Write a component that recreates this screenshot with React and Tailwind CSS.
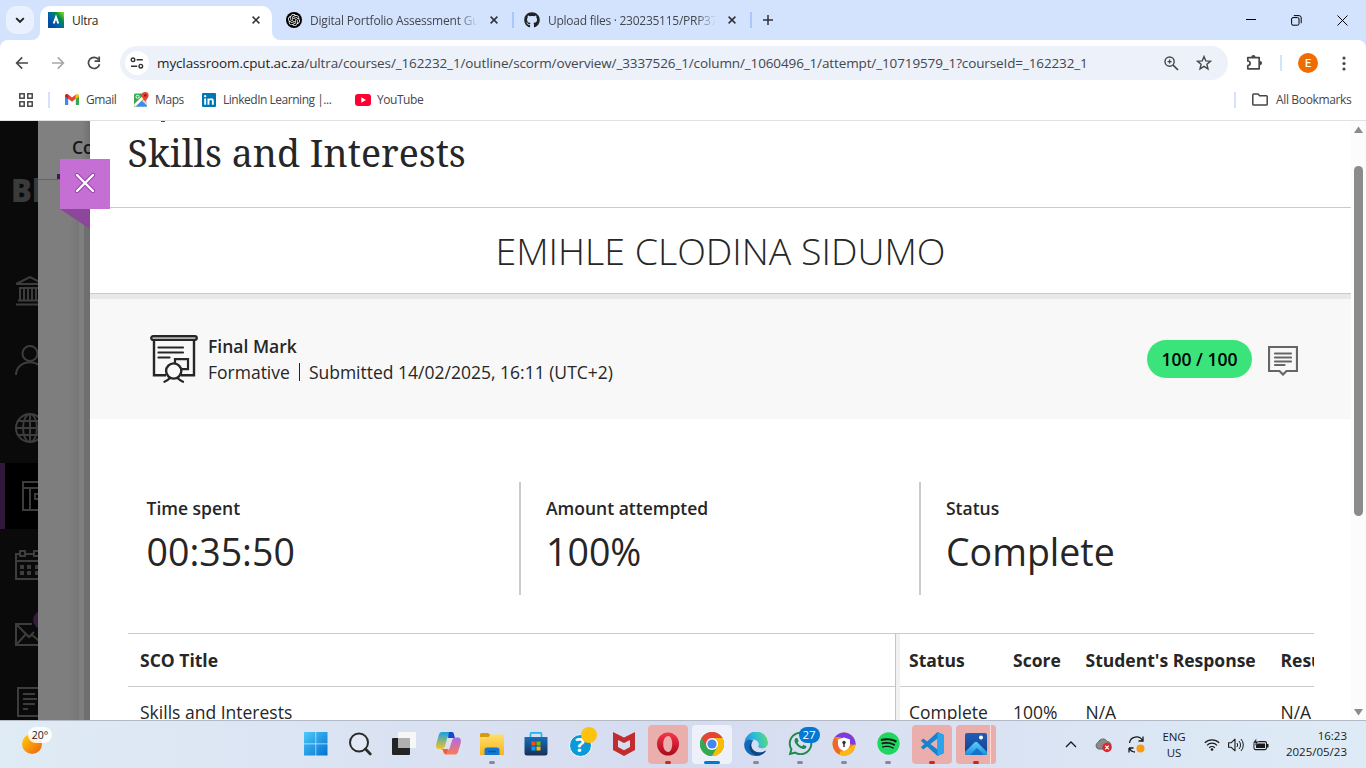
import React from "react";
import { FaGithub, FaWhatsapp, FaSpotify } from "react-icons/fa";
import { SiOpenai } from "react-icons/si";

const UI = "font-['Open_Sans','Noto_Sans',sans-serif]";

function Svg({ w, h, vb, children, className = "" }) {
  return (
    <svg width={w} height={h} viewBox={vb || `0 0 ${w} ${h}`} fill="none" className={`block shrink-0 ${className}`}>
      {children}
    </svg>
  );
}

function CloseX({ className = "" }) {
  return (
    <Svg w={8} h={8} className={className}>
      <path d="M0.6 0.6L7.4 7.4M7.4 0.6L0.6 7.4" stroke="#303236" strokeWidth="1.5" />
    </Svg>
  );
}

function TabStrip() {
  return (
    <div className="flex h-10 w-full bg-[#d3e2fd]">
      <div className="ml-1.5 mt-1.5 flex h-7 w-7 items-center justify-center rounded-[10px] bg-[#e9f0fe]">
        <Svg w={10} h={7}><path d="M1.2 1.2L5 5L8.8 1.2" stroke="#1f1f1f" strokeWidth="1.9" /></Svg>
      </div>
      <div className="relative ml-1.5 mt-1.5 flex h-[34px] w-[232px] items-center rounded-t-[10px] bg-white pb-[6px]">
        <Svg w={8} h={8} className="absolute -left-2 bottom-0"><path d="M8 0V8H0A8 8 0 0 0 8 0Z" fill="#fff" /></Svg>
        <Svg w={8} h={8} className="absolute -right-2 bottom-0"><path d="M0 0V8H8A8 8 0 0 1 0 0Z" fill="#fff" /></Svg>
        <Svg w={16} h={16} className="ml-2">
          <defs>
            <linearGradient id="ultra" x1="1" y1="0" x2="0.15" y2="0.7">
              <stop offset="0.08" stopColor="#7ed321" /><stop offset="0.4" stopColor="#008a4a" /><stop offset="0.75" stopColor="#0060b4" /><stop offset="1" stopColor="#064a9e" />
            </linearGradient>
          </defs>
          <rect width="16" height="16" fill="url(#ultra)" />
          <path d="M5.7 11.5L8 5L10.3 11.5" stroke="#fff" strokeWidth="1.9" />
        </Svg>
        <span className="ml-2 pt-px text-[12px] leading-4 tracking-[-0.3px] text-[#1f1f1f]">Ultra</span>
        <CloseX className="ml-auto mr-3" />
      </div>
      <div className="flex h-10 w-[242px] items-center pl-[14px]">
        <div className="flex h-4 w-4 items-center justify-center rounded-full bg-black"><SiOpenai size={12} color="#fff" /></div>
        <div className="ml-2 w-[168px] overflow-hidden whitespace-nowrap pt-px text-[12px] leading-4 tracking-[-0.2px] text-[#43474e] [mask-image:linear-gradient(to_right,#000_88%,transparent)]">Digital Portfolio Assessment Guide</div>
        <CloseX className="ml-3" />
        <div className="ml-auto h-4 w-[2px] bg-[#a8c7fa]" />
      </div>
      <div className="flex h-10 w-[238px] items-center pl-[10px]">
        <FaGithub size={16} color="#1f2328" />
        <div className="ml-2 w-[168px] overflow-hidden whitespace-nowrap pt-px text-[12px] leading-4 tracking-[-0.26px] text-[#43474e] [mask-image:linear-gradient(to_right,#000_88%,transparent)]">Upload files · 230235115/PRP370S</div>
        <CloseX className="ml-3" />
        <div className="ml-auto h-4 w-[2px] bg-[#a8c7fa]" />
      </div>
      <div className="flex h-10 items-center pl-[11px]">
        <Svg w={10} h={10}><path d="M5 0V10M0 5H10" stroke="#303236" strokeWidth="1.5" /></Svg>
      </div>
      <div className="ml-auto flex h-10 items-center">
        <Svg w={10} h={10} className="mr-[35px]"><path d="M0 4.5H10" stroke="#000" /></Svg>
        <Svg w={11} h={11} className="mr-[35px]">
          <rect x="0.6" y="2.6" width="7.4" height="7.6" rx="1.4" stroke="#000" />
          <path d="M2.8 0.6H8A2.3 2.3 0 0 1 10.2 2.9V8.2" stroke="#000" />
        </Svg>
        <Svg w={11} h={11} className="mr-[18px]"><path d="M0.5 0.5L10.5 10.5M10.5 0.5L0.5 10.5" stroke="#000" /></Svg>
      </div>
    </div>
  );
}

function Toolbar() {
  return (
    <div className="w-full bg-[#d3e2fd]">
      <div className="flex h-[46px] w-full items-center rounded-t-[8px] bg-white">
        <Svg w={14} h={14} className="ml-[15px]"><path d="M13 7H1.8M7.2 1.4L1.6 7L7.2 12.6" stroke="#474747" strokeWidth="1.6" /></Svg>
        <Svg w={14} h={14} className="ml-[22px]"><path d="M1 7H12.2M6.8 1.4L12.4 7L6.8 12.6" stroke="#a5a8ab" strokeWidth="1.6" /></Svg>
        <Svg w={14} h={14} className="ml-[22px]">
          <path d="M11.6 3.6A5.6 5.6 0 1 0 12.5 8.2" stroke="#474747" strokeWidth="1.7" />
          <path d="M12.2 0.6V5.2H7.6" stroke="#474747" strokeWidth="1.7" />
        </Svg>
        <div className="ml-[19px] flex h-[34px] w-[1108px] items-center rounded-full bg-[#ecf1fa]">
          <div className="ml-[5px] flex h-6 w-6 items-center justify-center rounded-full bg-white">
            <Svg w={14} h={12} className="text-[#303236]">
              <circle cx="3" cy="2.8" r="1.8" stroke="currentColor" strokeWidth="1.4" />
              <path d="M6.6 2.8H12.8M1 9.2H7.2" stroke="currentColor" strokeWidth="1.5" />
              <circle cx="10.8" cy="9.2" r="1.8" stroke="currentColor" strokeWidth="1.4" />
            </Svg>
          </div>
          <span className="ml-2 whitespace-nowrap text-[13.5px] leading-5 tracking-[-0.122px] text-[#43474e]">
            <span className="text-[#1f1f1f]">myclassroom.cput.ac.za</span>/ultra/courses/_162232_1/outline/scorm/overview/_3337526_1/column/_1060496_1/attempt/_10719579_1?courseId=_162232_1
          </span>
          <Svg w={15} h={15} className="ml-auto text-[#474747]">
            <circle cx="5.6" cy="5.6" r="4.6" stroke="currentColor" strokeWidth="1.4" />
            <path d="M9 9L14 14" stroke="currentColor" strokeWidth="1.7" />
            <path d="M5.6 3.6V7.6M3.6 5.6H7.6" stroke="currentColor" strokeWidth="1.3" />
          </Svg>
          <Svg w={16} h={16} className="ml-[17px] mr-4">
            <path d="M8 1.6L9.8 5.9L14.5 6.3L10.9 9.3L12 13.9L8 11.4L4 13.9L5.1 9.3L1.5 6.3L6.2 5.9Z" stroke="#474747" strokeWidth="1.4" />
          </Svg>
        </div>
        <Svg w={17} h={17} className="ml-[18px] mb-px">
          <path d="M1.8 3.6H13.2V14.8H1.8V11.6A2.2 2.2 0 0 0 1.8 7Z" stroke="#474747" strokeWidth="1.7" strokeLinejoin="round" />
          <path d="M5.3 3A2.1 2.1 0 0 1 9.5 3Z" fill="#474747" /><path d="M14 7A2.1 2.1 0 0 1 14 11.2Z" fill="#474747" />
        </Svg>
        <div className="ml-[17px] h-4 w-[2px] bg-[#d3e2fd]" />
        <div className="ml-4 flex h-5 w-5 items-center justify-center rounded-full bg-[#ef6c00] text-[11px] font-medium leading-none text-white font-[Roboto,sans-serif]">E</div>
        <Svg w={4} h={15} className="ml-[24px]"><circle cx="2" cy="2" r="1.6" fill="#474747" /><circle cx="2" cy="7.5" r="1.6" fill="#474747" /><circle cx="2" cy="13" r="1.6" fill="#474747" /></Svg>
      </div>
    </div>
  );
}

function Bookmarks() {
  return (
    <div className="flex h-[35px] w-full items-center border-b border-[#dfe1e4] bg-white pb-[7px] text-[12px] leading-4 text-[#43474e]">
      <Svg w={14} h={14} className="ml-[19px]">
        {[[0.8, 0.8], [8.8, 0.8], [0.8, 8.8], [8.8, 8.8]].map(([x, y]) => (
          <rect key={`${x}${y}`} x={x} y={y} width="4.4" height="4.4" stroke="#474747" strokeWidth="1.5" />
        ))}
      </Svg>
      <div className="ml-[15px] h-4 w-[2px] bg-[#d3e2fd]" />
      <Svg w={14} h={11} className="ml-[15px]">
        <path d="M0 1.6V11H3.2V4.6Z" fill="#4285f4" /><path d="M14 1.6V11H10.8V4.6Z" fill="#34a853" />
        <path d="M0 2.2C0 0 2 -0.4 3.2 0.6L7 3.6L10.8 0.6V4.8L7 7.8L3.2 4.8L0 2.6Z" fill="#ea4335" />
        <path d="M10.8 0.6C12 -0.4 14 0 14 2.2V2.6L10.8 5Z" fill="#fbbc04" /><path d="M0 2.2C0 0.6 1.2 0 2.2 0.2L3.2 0.8V5L0 2.6Z" fill="#c5221f" />
      </Svg>
      <span className="ml-[7px] w-[32px] whitespace-nowrap tracking-[-0.45px]">Gmail</span>
      <Svg w={15} h={15} className="ml-4">
        <rect y="1.5" width="13" height="13" rx="1.5" fill="#34a853" />
        <path d="M0.5 14L7 7.5L13 13.5V14.5H1Z" fill="#4285f4" />
        <path d="M0 12.5L9 3.5L11 6L1.5 14.5H1A1 1 0 0 1 0 13.5Z" fill="#fbbc04" />
        <path d="M8 9L13 13.5V5Z" fill="#d8dce0" />
        <path d="M0 12.5L7.5 5L9 7L1.5 14.5Z" fill="#fff" />
        <circle cx="3.6" cy="4.8" r="1.6" stroke="#fff" />
        <path d="M11.2 0A3.4 3.4 0 0 1 14.6 3.4C14.6 6 11.9 6.8 11.2 10.4C10.5 6.8 7.8 6 7.8 3.4A3.4 3.4 0 0 1 11.2 0Z" fill="#ea4335" />
        <circle cx="11.2" cy="3.4" r="1.2" fill="#8c1a12" />
      </Svg>
      <span className="ml-[6px] w-[30px] whitespace-nowrap tracking-[-0.4px]">Maps</span>
      <Svg w={14} h={14} className="ml-[17px]">
        <rect width="14" height="14" rx="1" fill="#0077b5" />
        <path d="M2.2 5.4H4.1V11.8H2.2ZM5.5 5.4H7.3V6.3C8.4 4.7 11.8 4.8 11.8 7.9V11.8H9.9V8.4C9.9 6.3 7.4 6.5 7.4 8.4V11.8H5.5Z" fill="#fff" /><circle cx="3.15" cy="3.2" r="1.15" fill="#fff" />
      </Svg>
      <span className="ml-[7px] w-[110px] whitespace-nowrap tracking-[-0.48px]">LinkedIn Learning |...</span>
      <Svg w={16} h={12} className="ml-[22px]"><rect width="16" height="12" rx="3" fill="#f03" /><path d="M6.3 3.2L11 6L6.3 8.8Z" fill="#fff" /></Svg>
      <span className="ml-[6px] whitespace-nowrap tracking-[-0.45px]">YouTube</span>
      <div className="ml-auto h-4 w-[2px] bg-[#d3e2fd]" />
      <Svg w={16} h={13} className="ml-4">
        <path d="M1.6 1H6L7.6 2.8H14.4A0.8 0.8 0 0 1 15.2 3.6V11.2A0.8 0.8 0 0 1 14.4 12H1.6A0.8 0.8 0 0 1 0.8 11.2V1.8A0.8 0.8 0 0 1 1.6 1Z" stroke="#474747" strokeWidth="1.5" />
      </Svg>
      <span className="ml-[8px] mr-[14px] w-[76px] whitespace-nowrap tracking-[-0.35px]">All Bookmarks</span>
    </div>
  );
}

const navIcons = [
  <Svg key="bank" w={30} h={30}><path d="M1 8L15 1.2L29 8H1M4 12H26M5 12V24M9 12V24M13 12V24M17 12V24M21 12V24M25 12V24M3 24.5H27M1 28.5H29V25" stroke="#3d3d3d" strokeWidth="2" /></Svg>,
  <Svg key="user" w={30} h={30}><circle cx="15" cy="8.5" r="7.5" stroke="#3d3d3d" strokeWidth="2" /><path d="M1 30C1 13 29 13 29 30" stroke="#3d3d3d" strokeWidth="2" /></Svg>,
  <Svg key="globe" w={30} h={30}><g stroke="#3d3d3d" strokeWidth="2"><circle cx="15" cy="15" r="14" /><ellipse cx="15" cy="15" rx="7" ry="14" /><path d="M15 1V29M1 15H29M3 8H27M3 22H27" /></g></Svg>,
  <Svg key="book" w={30} h={30} className="ml-[2px]"><g stroke="#3d3d3d" strokeWidth="2"><rect x="1" y="1" width="28" height="28" /><path d="M1 7H29M8 7V29M29 13H13V18H29" /></g></Svg>,
  <Svg key="cal" w={30} h={30}><g stroke="#3d3d3d" strokeWidth="2"><path d="M4 4H1V29H29V4M1 11H29M10 4H18M5 1H10V6H5ZM19 1H24V6H19Z" /><path d="M5 17H9M12 17H16M20 17H24M5 23H9M12 23H16M20 23H24" strokeWidth="4" /></g></Svg>,
  <Svg key="mail" w={30} h={30}><g stroke="#3d3d3d" strokeWidth="2"><path d="M17 6H1V27H29V6M1 6L14 19L19 14M1 27L11 16M14 19L17 17L29 27" /></g></Svg>,
  <Svg key="grades" w={30} h={30} className="ml-[2px]"><g stroke="#3d3d3d" strokeWidth="2"><path d="M24 29H1V1H24V20" /><path d="M6 7H18M6 12H20M6 17H18M6 22H11M20 30L24 25" /></g></Svg>,
];

function Backdrop() {
  return (
    <>
      <div className="flex h-full w-[38px] shrink-0 flex-col overflow-hidden bg-[#0a0a0a]">
        <div className="h-[136px] shrink-0 overflow-hidden whitespace-nowrap pl-[11px] pt-[52px] text-[31px] font-extrabold leading-[34px] text-[#3a3a3a]">Bl</div>
        {navIcons.map((icon, i) => (
          <div key={i} className={`relative flex shrink-0 items-center ${i === 3 ? "h-[66px] mb-[2px] border-l-[5px] border-[#32183a] bg-black pl-[15px]" : "h-[68.5px] pl-[15px]"}`}>
            {icon}
            {i === 5 && <div className="absolute left-[33px] top-[12px] h-[18px] w-[18px] rounded-full bg-[#351a3d]" />}
          </div>
        ))}
      </div>
      <div className="flex h-full w-[52px] shrink-0 flex-col overflow-hidden bg-gradient-to-r from-[#7e7e7e] from-60% to-[#6f6f6f]">
        <div className="flex h-[59px] shrink-0 flex-col items-end border-b border-[#656565] bg-gradient-to-r from-[#808080] from-85% to-[#707070]">
          <span className="mt-[14px] w-[18px] overflow-hidden whitespace-nowrap text-[17.5px] font-semibold leading-6 text-[#161616]">Content</span>
          <div className="mt-auto h-[5px] w-[33px] bg-[#4b1457]" />
        </div>
        <div className="flex flex-1 justify-end">
          <div className="w-[5px] bg-[#808080]" />
          <div className="w-[6px] bg-[#6f6f6f]" />
        </div>
      </div>
    </>
  );
}

function Metric({ label, value, first }) {
  return (
    <div className={`h-[113px] ${first ? "w-[391px] pl-[18.5px]" : "w-[400px] border-l-2 border-[#cbcbcb] pl-[25px]"}`}>
      <div className="pt-[14px] text-[17.5px] font-semibold leading-6">{label}</div>
      <div className="mt-[8px] text-[37.5px] leading-[48px]">{value}</div>
    </div>
  );
}

function Panel() {
  return (
    <div className="flex h-full w-[1261px] shrink-0 flex-col overflow-hidden bg-white text-[#262626]">
      <div className="relative h-[87px] shrink-0 border-b border-[#cbcbcb] pl-[37.5px] pt-[7px]">
        <div className="absolute left-[71px] top-0 h-[1px] w-[4px] bg-[#4a4a4a]" />
        <div className="whitespace-nowrap text-[37.5px] leading-[50px] font-['Noto_Serif','DejaVu_Serif_Condensed','DejaVu_Serif',serif]">Skills and Interests</div>
      </div>
      <div className="flex h-[86px] shrink-0 items-center justify-center border-b border-[#cbcbcb] pt-[2px] text-[37.5px] font-light"><span className="whitespace-nowrap">EMIHLE CLODINA SIDUMO</span></div>
      <div className="flex h-[125px] shrink-0 items-center border-t-[5px] border-[#e8e8e8] bg-[#f8f8f8] pl-[60px]">
        <Svg w={48} h={48} className="text-[#262626]">
          <rect x="1.2" y="1.2" width="45.6" height="3.8" rx="1.9" fill="#b5b5b5" stroke="currentColor" strokeWidth="2.2" />
          <path d="M4 5V40.2H16M31 40.2H44V5" stroke="currentColor" strokeWidth="2.4" />
          <path d="M8.5 12.5H33M8.5 17.5H33M8.5 22.5H19.5" stroke="currentColor" strokeWidth="2.2" strokeLinecap="round" />
          <path d="M25 28V24.2H38V34.2H32" stroke="currentColor" strokeWidth="2.2" />
          <circle cx="23.7" cy="36" r="7.6" stroke="currentColor" strokeWidth="2.4" fill="#f8f8f8" />
          <path d="M14.5 46.8C17 45.8 18.5 44.5 20 43M33 46.8C30.5 45.8 29 44.5 27.5 43" stroke="currentColor" strokeWidth="2.2" strokeLinecap="round" />
        </Svg>
        <div className="ml-[10px] whitespace-nowrap text-[17.5px] leading-[26px]">
          <div className="font-semibold">Final Mark</div>
          <div className="flex items-center"><span>Formative</span><span className="mx-[9px] h-[18px] w-px bg-[#262626]" /><span>Submitted 14/02/2025, 16:11 (UTC+2)</span></div>
        </div>
        <div className="ml-auto flex h-[38px] w-[105px] items-center justify-center rounded-full bg-[#3be47b] text-[17.5px] font-semibold text-black"><span className="whitespace-nowrap">100 / 100</span></div>
        <Svg w={30} h={30} className="ml-4 mr-[53px] mt-[3px]">
          <path d="M1 1H29V25H18.5L15 28.5L11.5 25H1Z" stroke="#666" strokeWidth="2.2" />
          <path d="M7 7.5H23M7 11.5H23M7 15.5H23M7 19H16.5" stroke="#666" strokeWidth="2.2" strokeLinecap="round" />
        </Svg>
      </div>
      <div className="mt-[63px] flex shrink-0 pl-[38px]">
        <Metric first label="Time spent" value="00:35:50" />
        <Metric label="Amount attempted" value="100%" />
        <Metric label="Status" value="Complete" />
      </div>
      <div className="ml-[38px] mt-[38px] flex w-[1186px] shrink-0 overflow-hidden border-t border-[#cbcbcb] text-[17.5px]">
        <div className="w-[768px] shrink-0 border-r border-[#c4c4c4]">
          <div className="flex h-[53px] items-center border-b border-[#cbcbcb] pl-3 pt-px font-bold">SCO Title</div>
          <div className="flex h-[51px] items-center pl-3">Skills and Interests</div>
        </div>
        <div className="w-1 shrink-0 bg-[#f1f1f1]" />
        <div className="grid w-[600px] shrink-0 grid-cols-[104px_72.5px_195px_228px] whitespace-nowrap">
          {["Status", "Score", "Student's Response", "Result"].map((t) => (
            <div key={t} className="flex h-[53px] items-center border-b border-[#cbcbcb] pl-[9px] pt-px font-bold">{t}</div>
          ))}
          {["Complete", "100%", "N/A", "N/A"].map((t, i) => (
            <div key={i} className="flex h-[51px] items-center pl-[9px]">{t}</div>
          ))}
        </div>
      </div>
    </div>
  );
}

function Content() {
  return (
    <div className="relative flex h-[599px] w-full overflow-hidden">
      <Backdrop />
      <Panel />
      <div className="flex h-full w-[15px] flex-col items-center bg-[#fcfcfc]">
        <Svg w={9} h={7} className="mt-[5px]"><path d="M4.5 0.5L9 7H0Z" fill="#8b8b8b" /></Svg>
        <div className="mt-[33px] h-[350px] w-[9px] rounded-full bg-[#8b8b8b]" />
        <Svg w={9} h={7} className="mb-[4px] mt-auto"><path d="M0 0H9L4.5 6.5Z" fill="#8b8b8b" /></Svg>
      </div>
      <div className="absolute left-[60px] top-[38px]">
        <div className="flex h-[50px] w-[50px] items-center justify-center bg-[#c56fd5] pb-[2px]">
          <Svg w={24} h={24}>
            <path d="M4 4L20 20M20 4L4 20" stroke="#9c3fb0" strokeWidth="4.4" strokeLinecap="round" />
            <path d="M4 4L20 20M20 4L4 20" stroke="#fff" strokeWidth="2.4" strokeLinecap="round" />
          </Svg>
        </div>
        <Svg w={30} h={20}><path d="M0 0H30V20Z" fill="#8b4799" /></Svg>
      </div>
    </div>
  );
}

const Grad = ({ id, a, b, x2 = 0, y2 = 1 }) => (
  <linearGradient id={id} x1="0" y1="0" x2={x2} y2={y2}><stop stopColor={a} /><stop offset="1" stopColor={b} /></linearGradient>
);

const apps = [
  { n: "start", icon: <Svg w={24} h={24}><defs><Grad id="win" a="#4fc9fb" b="#0072d0" x2={1} /></defs><path d="M0 0H11.5V11.5H0ZM12.2 0H23.5V11.5H12.2ZM0 12.2H11.5V23.5H0ZM12.2 12.2H23.5V23.5H12.2Z" fill="url(#win)" /></Svg> },
  { n: "search", icon: <Svg w={24} h={24}><circle cx="11" cy="10.5" r="9" stroke="#2a2a2a" strokeWidth="2" fill="#e3e9f4" /><path d="M17.5 17L22.3 22" stroke="#2a2a2a" strokeWidth="2.6" strokeLinecap="round" /></Svg> },
  { n: "view", icon: <Svg w={24} h={24}><rect x="0" y="6" width="18" height="17" rx="1" fill="#242424" /><rect x="6" y="0" width="18" height="16" rx="1" fill="#f7f7f7" /><rect x="6" y="6" width="12" height="10" fill="#b0b0b0" /></Svg> },
  { n: "copilot", icon: <Svg w={25} h={23}>
    <defs>
      <Grad id="c1" a="#16a0e8" b="#f5c51c" /><Grad id="c2" a="#a96bf0" b="#ff7a50" />
    </defs>
    <path d="M6 0H15C17 0 17.5 2 18 4H14C12 4 11.5 5 11 7L9 14C8.5 16 7 17 5 17H3C0 17 -0.4 14 0.5 11L2.5 4C3.2 1.5 4 0 6 0Z" fill="url(#c1)" />
    <path d="M13 0H16C18 0 18 3 19 6H12Z" fill="#1748c8" />
    <path d="M19 22.5H10C8 22.5 7.5 20.5 7 18H11C13 18 13.5 17 14 15L16 8.5C16.5 6.5 18 5.5 20 5.5H22C25 5.5 25.4 9 24.5 12L22.5 18.5C21.8 21 21 22.5 19 22.5Z" fill="url(#c2)" />
    <path d="M5 17H12L11 21C10 23 8 22 7 18Z" fill="#fa5a3c" /></Svg> },
  { n: "files", dot: "bg-[#858a96]", icon: <Svg w={24} h={22}><defs><Grad id="fo" a="#ffdf6b" b="#f6b41e" /></defs><path d="M0 1.5A1.5 1.5 0 0 1 1.5 0H8L10.5 2H24V9H0Z" fill="#d9990f" /><path d="M0 4H8.5L10.5 1.5H22.5A1.5 1.5 0 0 1 24 3V22H0Z" fill="url(#fo)" /><path d="M4.5 22V17A2.5 2.5 0 0 1 7 14.5H17A2.5 2.5 0 0 1 19.5 17V22Z" fill="#1277cf" /><path d="M8 18.5H16" stroke="#0a58a4" strokeWidth="1.5" /></Svg> },
  { n: "store", icon: <Svg w={24} h={24}><defs><Grad id="st" a="#146fbd" b="#1b2f55" /></defs><path d="M6.5 6V2A1.2 1.2 0 0 1 7.7 0.8H16.3A1.2 1.2 0 0 1 17.5 2V6" stroke="#1fb4ea" strokeWidth="1.7" /><path d="M0.5 5H23.5V21A2.5 2.5 0 0 1 21 23.5H3A2.5 2.5 0 0 1 0.5 21Z" fill="url(#st)" /><path d="M7.5 9.5H11.5V13.5H7.5Z" fill="#f25022" /><path d="M12.5 9.5H16.5V13.5H12.5Z" fill="#7fba00" /><path d="M7.5 14.5H11.5V18.5H7.5Z" fill="#00a4ef" /><path d="M12.5 14.5H16.5V18.5H12.5Z" fill="#ffb900" /></Svg> },
  { n: "help", icon: <div className="relative mb-[2px] ml-[5px] flex h-7 w-7 items-end"><div className="flex h-[23px] w-[23px] items-center justify-center rounded-full border border-white bg-[#0a9ad8] text-[20px] font-bold leading-none text-white">?</div><div className="absolute right-0 -top-[2px] h-4 w-4 rounded-full bg-[#ffc20e]" /></div> },
  { n: "mcafee", icon: <Svg w={22} h={24}><path d="M0 0L11 5.5L22 0V18L11 24L0 18ZM5 8V15L11 18.3L17 15V8L11 11Z" fill="#c32c2f" fillRule="evenodd" /></Svg> },
  { n: "opera", box: "bg-[#eaafad]", dot: "bg-[#c42b1c]", icon: <Svg w={22} h={24}><defs><Grad id="op" a="#f8344a" b="#a80b1c" /></defs><path d="M11 0.5A11 11.5 0 1 1 11 23.5A11 11.5 0 1 1 11 0.5ZM11.5 4C4.5 4 4.5 20 11.5 20C16.5 19 16.5 5 11.5 4Z" fill="url(#op)" fillRule="evenodd" /></Svg> },
  { n: "chrome", box: "bg-[#eef1f9]", dot: "w-4 bg-[#0078d4]", wide: true, icon: <Svg w={24} h={24}><circle cx="12" cy="12" r="12" fill="#34a853" /><path d="M1.6 6A12 12 0 0 1 22.4 6H12L6.8 15Z" fill="#ea4335" /><path d="M1.6 6A12 12 0 0 0 12 24L17.2 15H6.8Z" fill="#34a853" /><path d="M22.4 6A12 12 0 0 1 12 24L17.2 15L12 6Z" fill="#fbbc05" /><circle cx="12" cy="12" r="6" fill="#fff" /><circle cx="12" cy="12" r="4.6" fill="#4285f4" /></Svg> },
  { n: "edge", dot: "bg-[#858a96]", icon: <Svg w={24} h={24}><defs><linearGradient id="ed" x1="0" y1="0.5" x2="1" y2="0.3"><stop stopColor="#1f8fdd" /><stop offset="0.5" stopColor="#2dbfd6" /><stop offset="1" stopColor="#5fdc6c" /></linearGradient></defs><path d="M0.5 10A11.8 11.8 0 0 1 24 10.5C24 15 20 17 16 16C13.5 15.3 14.5 14 14.8 12.5C15 9 10 6.5 5 8C3 8.6 1 9.5 0.5 10Z" fill="url(#ed)" /><path d="M0.2 12C0.5 8 6 6.5 9.5 8C5 11 7 20.5 15.5 20.5C19 20.5 21.5 19 22 18.5C20 22 16 24 12 24C5 24 -0.2 18.5 0.2 12Z" fill="#1468b8" /><path d="M9.5 8.5C5 12 7 20.5 15.5 20.5C19 20.5 21.5 19 22 18.5C20 22 16 24 12 23.5C4 20 3.5 12 9.5 8.5Z" fill="#0d4583" /></Svg> },
  { n: "whatsapp", dot: "bg-[#858a96]", icon: <div className="relative"><FaWhatsapp size={27} color="#1f8a4c" /><div className="absolute -right-[6px] -top-[3px] flex h-4 w-[21px] items-center justify-center rounded-full bg-[#0078d4] text-[11.5px] leading-none text-white">27</div></div> },
  { n: "avg", dot: "bg-[#858a96]", icon: <Svg w={24} h={24}><circle cx="12" cy="12" r="11.5" fill="#f58220" /><path d="M3 5A11.5 11.5 0 0 1 23.5 13L17 12L8 5Z" fill="#7a3bea" /><path d="M23.5 12A11.5 11.5 0 0 1 5 21L14 18Z" fill="#fdb813" /><path d="M3 5A11.5 11.5 0 0 0 8 22.5L7 12Z" fill="#f2662b" /><path d="M12 5.5L18 7.5V12C18 15.5 15 18 12 19C9 18 6 15.5 6 12V7.5Z" fill="#fff" /><circle cx="12" cy="10.5" r="1.7" fill="#333" /><path d="M12 11V15" stroke="#333" strokeWidth="1.5" /></Svg> },
  { n: "spotify", dot: "bg-[#858a96]", icon: <div className="flex h-[21px] w-[21px] items-center justify-center rounded-full bg-[#111]"><FaSpotify size={23} color="#1ed760" className="block shrink-0" /></div> },
  { n: "vscode", box: "bg-[#eaafad]", dot: "bg-[#c42b1c]", icon: <Svg w={24} h={24}><path d="M17.5 0L24 3V21L17.5 24L0.8 8.8L3.3 6.6L17.5 17.5V6.5L3.3 17.4L0.8 15.2L17.5 0Z" fill="#1484cf" /><path d="M17.5 0L24 3V21L17.5 24Z" fill="#2aa4ee" /></Svg> },
  { n: "photos", box: "bg-[#eaafad]", dot: "bg-[#c42b1c]", stack: true, icon: <Svg w={22} h={22}><defs><Grad id="ph" a="#1d5fb8" b="#143f88" /><Grad id="ph2" a="#5bd0fa" b="#1b8ee0" /></defs><rect width="22" height="22" rx="2" fill="url(#ph)" /><path d="M0 19L9.5 9.5Q11 8.2 12.5 9.5L22 19V20A2 2 0 0 1 20 22H2A2 2 0 0 1 0 20Z" fill="url(#ph2)" /><path d="M5 22L12 15L19 22Z" fill="#1672c8" /><circle cx="16" cy="4.5" r="2" fill="#fff" /></Svg> },
];

function Taskbar() {
  return (
    <div className="flex h-12 w-full border-t border-[#b3bac5] bg-gradient-to-r from-[#dfebf5] via-[#d6dcf0] to-[#deebf6] text-[#1a1a1a]">
      <div className="relative w-[294px] shrink-0">
        <div className="absolute left-[22px] top-[13px] h-5 w-5 rounded-full bg-gradient-to-br from-[#ffd10a] to-[#ea5a0c]" />
        <div className="absolute left-[28px] top-[6px] flex h-4 w-6 items-center justify-center rounded-full bg-white/85 text-[10.5px] leading-none">20°</div>
      </div>
      {apps.map((a) => (
        <div key={a.n} className="relative flex h-[47px] w-11 shrink-0 items-center justify-center pb-[2px]">
          {a.box && <div className={`absolute left-[2px] top-[4px] h-[39px] w-10 rounded-[4px] ${a.box}`} />}
          {a.stack && <div className="absolute left-[36px] top-[4px] h-[39px] w-[6px] rounded-r-[4px] border-l border-[#fbdcd8] bg-[#eaafad]" />}
          <div className="relative">{a.icon}</div>
          {a.dot && <div className={`absolute bottom-[4px] h-[3px] rounded-full ${a.wide ? "" : "w-[6px]"} ${a.dot}`} />}
        </div>
      ))}
      <div className="ml-auto flex items-center">
        <Svg w={12} h={7} className="mr-[18px]"><path d="M1 6L6 1L11 6" stroke="#1a1a1a" strokeWidth="1.3" /></Svg>
        <Svg w={18} h={16} className="mr-[15px] mt-[2px]"><path d="M3.5 11A3.5 3.5 0 0 1 3 4.5C5 0 10.5 0 12 3.5A4 4 0 0 1 14 11Z" fill="#8a8a8a" stroke="#666" /><circle cx="12" cy="9.5" r="4.7" fill="#dc2630" /><path d="M10.2 7.7L13.8 11.3M13.8 7.7L10.2 11.3" stroke="#fff" strokeWidth="1.2" /></Svg>
        <Svg w={18} h={18} className="mr-[16px]"><path d="M1.5 7A7 7 0 0 1 14.5 4.5M15 0.5V5H10.5M1 12V16.5M1 12H5.5M1.5 12.5C2.5 14.5 4.5 16 7 16" stroke="#1a1a1a" strokeWidth="1.3" /><circle cx="12.5" cy="12.5" r="4" fill="#ff9a0c" /></Svg>
        <div className="mr-[18px] w-6 text-center text-[11.5px] leading-4 tracking-[-0.1px]">ENG<br />US</div>
        <Svg w={16} h={13} className="mr-2"><path d="M0.8 4.8A10.2 10.2 0 0 1 15.2 4.8M3 7.3A7 7 0 0 1 13 7.3M5.2 9.7A4 4 0 0 1 10.8 9.7" stroke="#1a1a1a" strokeWidth="1.2" /><circle cx="8" cy="11.5" r="1.3" fill="#1a1a1a" /></Svg>
        <Svg w={17} h={14} className="mr-2"><path d="M0.6 4.8H3L7 1.2V12.8L3 9.2H0.6Z" stroke="#1a1a1a" strokeWidth="1.1" strokeLinejoin="round" /><path d="M9 5A3.5 3.5 0 0 1 9 9M11 3A6 6 0 0 1 11 11M13 1A9 9 0 0 1 13 13" stroke="#1a1a1a" /></Svg>
        <Svg w={16} h={13} className="mr-[15px]"><rect x="1" y="3.6" width="12.5" height="8" rx="1.5" stroke="#1a1a1a" strokeWidth="1.1" /><rect x="3" y="5.5" width="9" height="4.5" fill="#1a1a1a" /><rect x="14" y="6" width="1.5" height="3.5" fill="#1a1a1a" /><path d="M3.5 0L0 5H2.5L1.5 8.5L5.5 3.5H3.2Z" fill="#1a1a1a" stroke="#deebf6" strokeWidth="0.4" /></Svg>
        <div className="mr-[19px] flex w-[63px] flex-col items-end whitespace-nowrap pb-px text-[11.5px] leading-4"><div>16:23</div><div>2025/05/23</div></div>
      </div>
    </div>
  );
}

export default function App() {
  return (
    <div className={`flex h-[768px] w-[1366px] flex-col overflow-hidden ${UI}`}>
      <TabStrip />
      <Toolbar />
      <Bookmarks />
      <Content />
      <Taskbar />
    </div>
  );
}
